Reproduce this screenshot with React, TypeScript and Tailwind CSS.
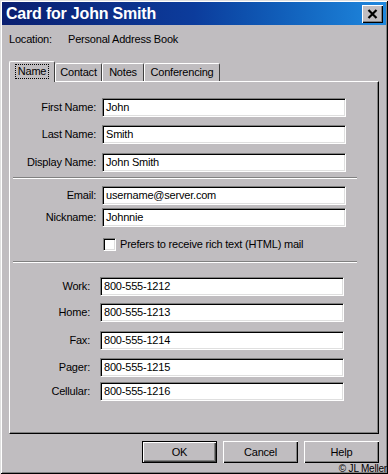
import React from "react";

const font = { fontFamily: '"Liberation Sans", Arial, sans-serif' };

function Field({ value, w = 244 }: { value: string; w?: number }) {
  return (
    <div
      className="h-[19px] bg-white border-t border-l border-t-[#808080] border-l-[#808080] border-b border-r border-b-white border-r-white shadow-[inset_1px_1px_#000,inset_-1px_-1px_#dfdfdf] flex items-center pl-[3px] text-[11px] text-black"
      style={{ width: w }}
    >
      {value}
    </div>
  );
}

function Row({ label, value, lw, gap, mt }: { label: string; value: string; lw: number; gap: number; mt: number }) {
  return (
    <div className="flex items-center" style={{ marginTop: mt }}>
      <div className="text-right text-[11px] text-black" style={{ width: lw, marginRight: gap }}>
        {label}
      </div>
      <Field value={value} />
    </div>
  );
}

function Sep({ mt }: { mt: number }) {
  return <div className="ml-[3px] w-[344px] h-[2px] border-t border-t-[#808080] border-b border-b-white" style={{ marginTop: mt }} />;
}

function Btn({ label, def }: { label: string; def?: boolean }) {
  return (
    <div
      className={
        "w-[75px] h-[22px] flex items-center justify-center text-[11px] text-black bg-[#c0bdc0] " +
        (def
          ? "border border-black shadow-[inset_1px_1px_#fff,inset_-1px_-1px_#404040,inset_-2px_-2px_#808080]"
          : "shadow-[inset_1px_1px_#fff,inset_-1px_-1px_#000,inset_-2px_-2px_#808080]")
      }
    >
      {label}
    </div>
  );
}

export default function App() {
  return (
    <div
      className="w-[388px] h-[474px] bg-[#c0bdc0] shadow-[inset_1px_1px_#dfdfdf,inset_-1px_-1px_#000,inset_2px_2px_#fff,inset_-2px_-2px_#808080] flex flex-col overflow-hidden tracking-[-0.2px]"
      style={font}
    >
      {/* Title bar */}
      <div className="mx-[2px] mt-[2px] h-[23px] bg-gradient-to-r from-[#0a1f70] via-[#0c3c9c] to-[#1f88de] flex items-center justify-between pl-[4px] pr-[3px]">
        <span className="text-white font-bold text-[16px] tracking-[-0.2px]" style={{ fontFamily: '"Comic Sans MS", "Liberation Sans", sans-serif' }}>
          Card for John Smith
        </span>
        <div className="w-[21px] h-[18px] bg-[#c0bdc0] shadow-[inset_1px_1px_#fff,inset_-1px_-1px_#000,inset_-2px_-2px_#808080] flex items-center justify-center">
          <svg width="11" height="10" viewBox="0 0 11 10">
            <path d="M1.5 1 L9.5 9 M9.5 1 L1.5 9" stroke="#000" strokeWidth="2.2" />
          </svg>
        </div>
      </div>

      {/* Location */}
      <div className="flex items-center mt-[7px] ml-[9px] h-[14px] text-[11px] text-black">
        <span className="w-[59px]">Location:</span>
        <span>Personal Address Book</span>
      </div>

      {/* Tabs */}
      <div className="flex items-end ml-[9px] mt-[15px] h-[21px] relative z-10 -mb-[1px]">
        <div className="w-[46px] h-[21px] bg-[#c0bdc0] border-t border-l border-t-white border-l-white border-r border-r-[#404040] rounded-t-[2px] flex items-start justify-center pt-[2px] text-[11px] text-black">
          <span className="border border-dotted border-black px-[2px] leading-[13px]">Name</span>
        </div>
        {[
          ["Contact", 47],
          ["Notes", 42],
          ["Conferencing", 76],
        ].map(([t, w]) => (
          <div
            key={t as string}
            className="h-[18px] mb-[1px] bg-[#c0bdc0] border-t border-l border-t-white border-l-white border-r border-r-[#404040] rounded-t-[2px] flex items-center justify-center text-[11px] text-black"
            style={{ width: w as number }}
          >
            {t}
          </div>
        ))}
      </div>

      {/* Panel */}
      <div className="ml-[9px] w-[370px] h-[354px] border-t border-l border-t-white border-l-white border-r border-b border-r-black border-b-black shadow-[inset_-1px_-1px_#808080] flex flex-col">
        <Row label="First Name:" value="John" lw={86} gap={6} mt={16} />
        <Row label="Last Name:" value="Smith" lw={86} gap={6} mt={8} />
        <Row label="Display Name:" value="John Smith" lw={86} gap={6} mt={9} />
        <Sep mt={5} />
        <Row label="Email:" value="username@server.com" lw={86} gap={6} mt={7} />
        <Row label="Nickname:" value="Johnnie" lw={86} gap={6} mt={3} />
        <div className="flex items-center mt-[9px] ml-[93px]">
          <div className="w-[13px] h-[13px] bg-white border-t border-l border-t-[#808080] border-l-[#808080] border-b border-r border-b-white border-r-white shadow-[inset_1px_1px_#000,inset_-1px_-1px_#dfdfdf]" />
          <span className="ml-[4px] text-[11px] text-black">Prefers to receive rich text (HTML) mail</span>
        </div>
        <Sep mt={8} />
        <Row label="Work:" value="800-555-1212" lw={80} gap={10} mt={14} />
        <Row label="Home:" value="800-555-1213" lw={80} gap={10} mt={7} />
        <Row label="Fax:" value="800-555-1214" lw={80} gap={10} mt={9} />
        <Row label="Pager:" value="800-555-1215" lw={80} gap={10} mt={8} />
        <Row label="Cellular:" value="800-555-1216" lw={80} gap={10} mt={5} />
      </div>

      {/* Buttons */}
      <div className="flex ml-[142px] mt-[7px] gap-[6px]">
        <Btn label="OK" def />
        <Btn label="Cancel" />
        <Btn label="Help" />
      </div>

      <div className="flex justify-end pr-[1px] mt-[1px] h-[10px] text-[10px] leading-[10px] text-black">
        © JL Meller
      </div>
    </div>
  );
}
